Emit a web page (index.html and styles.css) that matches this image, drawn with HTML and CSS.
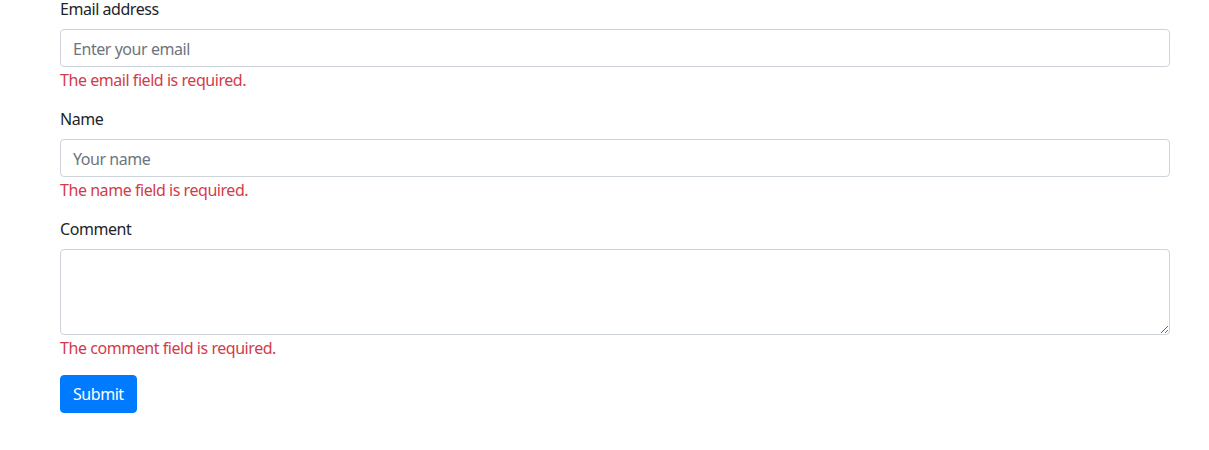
FILE: index.html
```html
<!DOCTYPE html>
<html lang="en">
<head>
<meta charset="utf-8">
<title>Form</title>
<link rel="stylesheet" href="styles.css">
</head>
<body>
<form class="form">
  <div class="form-group">
    <label class="label" for="email">Email address</label>
    <input class="control" id="email" type="email" placeholder="Enter your email">
    <div class="error">The email field is required.</div>
  </div>
  <div class="form-group">
    <label class="label" for="name">Name</label>
    <input class="control" id="name" type="text" placeholder="Your name">
    <div class="error">The name field is required.</div>
  </div>
  <div class="form-group">
    <label class="label" for="comment">Comment</label>
    <textarea class="control textarea" id="comment" rows="3"></textarea>
    <div class="error">The comment field is required.</div>
  </div>
  <button class="btn" type="submit">Submit</button>
</form>
</body>
</html>
```

FILE: styles.css
```css
html, body {
  margin: 0;
  padding: 0;
  background: #fff;
}
body {
  font-family: "Noto Sans", "Liberation Sans", sans-serif;
  font-size: 16px;
  line-height: 24px;
  letter-spacing: -0.45px;
  color: #212529;
}
.form {
  width: 1110px;
  margin: -3px 0 0 60px;
  display: flex;
  flex-direction: column;
  align-items: flex-start;
}
.form-group {
  display: flex;
  flex-direction: column;
  width: 100%;
  margin-bottom: 16px;
}
.label {
  display: block;
  margin-bottom: 8px;
}
.control {
  box-sizing: border-box;
  width: 100%;
  height: 38px;
  padding: 7px 12px 5px;
  font: inherit;
  letter-spacing: inherit;
  color: #495057;
  background: #fff;
  border: 1px solid #ced4da;
  border-radius: 4px;
  margin: 0;
}
.control::placeholder {
  color: #6c757d;
  opacity: 1;
}
.textarea {
  height: 86px;
  resize: vertical;
  display: block;
}
.error {
  color: #d23c4a;
  padding-top: 1px;
  margin-bottom: -1px;
}
.btn {
  box-sizing: border-box;
  height: 38px;
  padding: 6px 12px;
  font: inherit;
  letter-spacing: inherit;
  color: #fff;
  background: #007bff;
  border: 1px solid #007bff;
  border-radius: 4px;
  cursor: pointer;
}
```
